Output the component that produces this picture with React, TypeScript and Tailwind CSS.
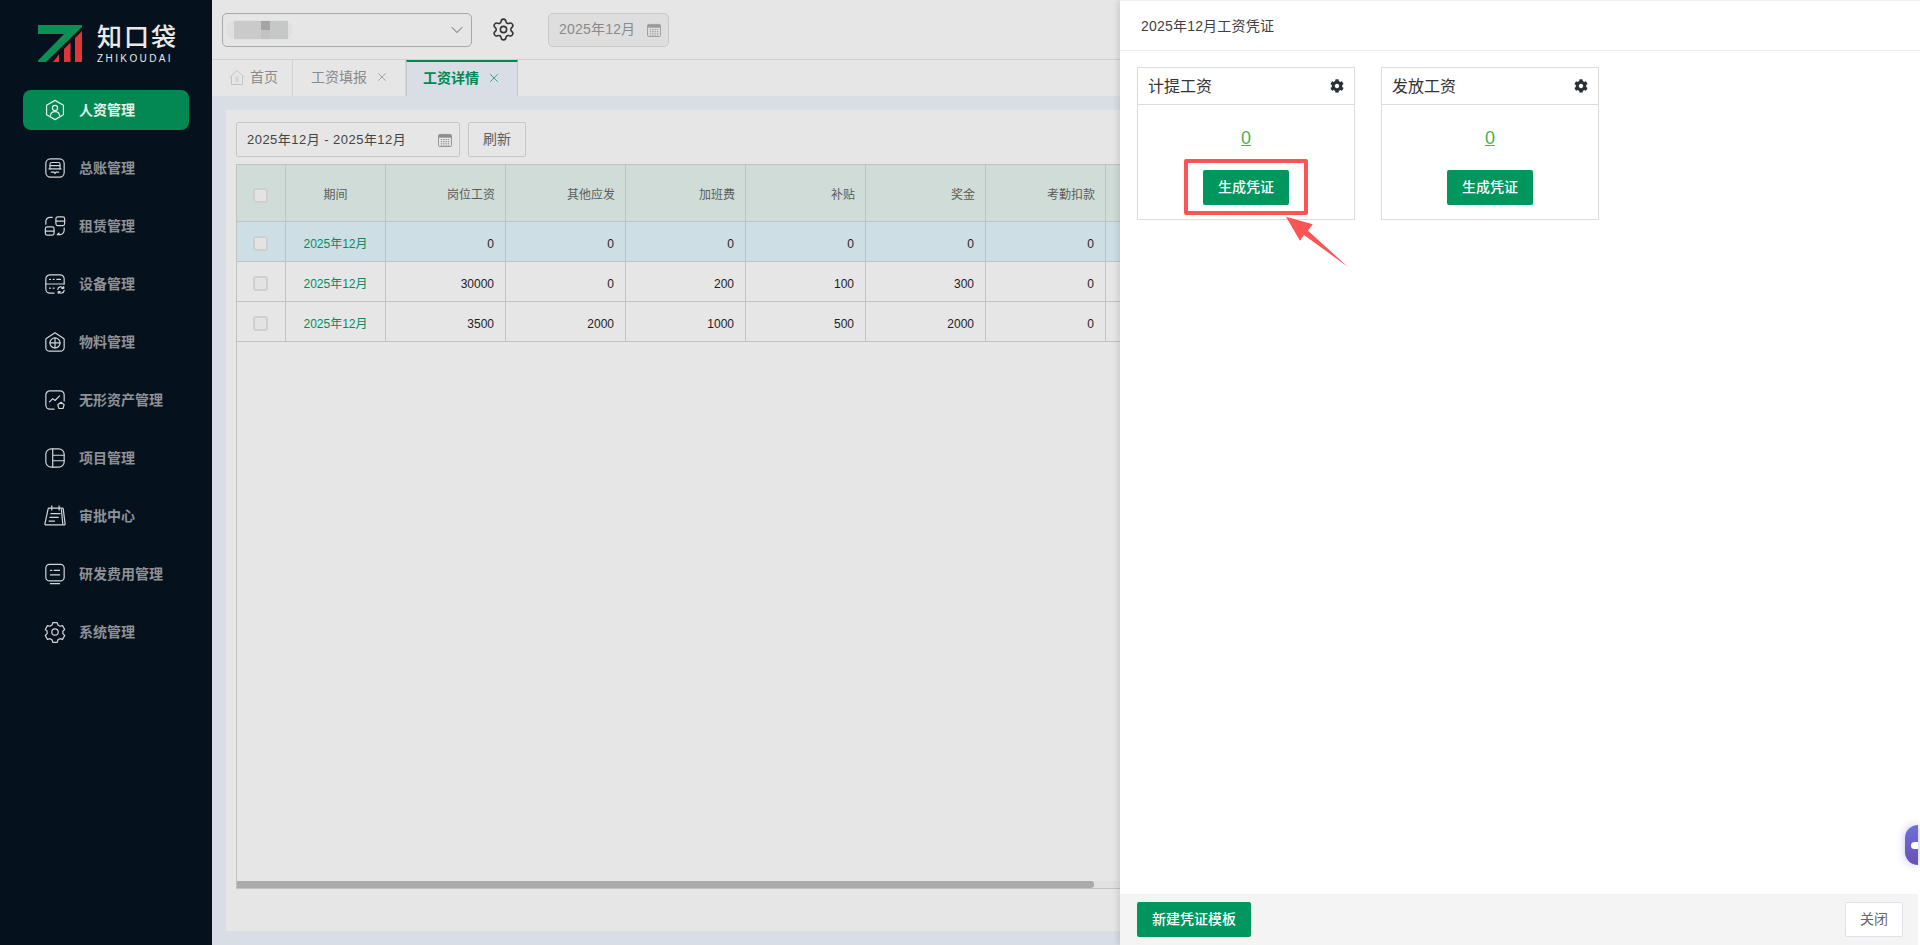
import React from "react";
import { ChevronDown, Settings, X } from "lucide-react";
import { FaCog } from "react-icons/fa";

const font = "font-['Liberation_Sans','Noto_Sans_CJK_SC',sans-serif]";

function I({ children }: { children: React.ReactNode }) {
  return (
    <svg width="24" height="24" viewBox="0 0 24 24" fill="none" stroke="currentColor" strokeWidth="1.3" strokeLinecap="round" strokeLinejoin="round" className="shrink-0">
      {children}
    </svg>
  );
}

const navIcons: Record<string, React.ReactNode> = {
  hr: (
    <I>
      <path d="M12 1.500l9.200 5.300v10.400L12 22.500l-9.200-5.300V6.800z" />
      <circle cx="12" cy="9.800" r="2.800" />
      <path d="M7 18c.4-2.800 2.400-4.200 5-4.200s4.600 1.400 5 4.200" />
    </I>
  ),
  ledger: (
    <I>
      <rect x="2" y="2" width="20" height="20" rx="5" />
      <path d="M6.500 13V8a2 2 0 0 1 2-2h7a2 2 0 0 1 2 2v5" />
      <path d="M5.500 13h13M7 9.500h10M8 16.500h3l1 1.500 1-1.500h3" />
    </I>
  ),
  lease: (
    <I>
      <rect x="13" y="2" width="9.500" height="9.500" rx="2" />
      <path d="M13 6.700h9.500" />
      <rect x="1.500" y="13" width="9.500" height="9" rx="2" />
      <path d="M1.500 17.500h9.500" />
      <path d="M2 10V7a4.500 4.500 0 0 1 4.500-4.500H9" />
      <path d="M22 14v2.500a5 5 0 0 1-5 5h-2.500M14.500 21.500l2-1.800" />
    </I>
  ),
  device: (
    <I>
      <path d="M11 22H6.500A4.500 4.500 0 0 1 2 17.500v-11A4.500 4.500 0 0 1 6.500 2h11A4.500 4.500 0 0 1 22 6.500V12" />
      <path d="M2 12h20M6 7h1M10 7h1M14 7h4M6 16.500h1M10 16.500h1" />
      <path d="M15 18a3.300 3.300 0 0 1 6-1.500M22 19a3.300 3.300 0 0 1-6 1.500M21.500 14.800v2h-2M15.500 22.200v-2h2" />
    </I>
  ),
  material: (
    <I>
      <path d="M12 1.800l9.500 6.400a1.500 1.500 0 0 1 .5 1.200V18a4 4 0 0 1-4 4H6a4 4 0 0 1-4-4V9.400a1.500 1.500 0 0 1 .5-1.200z" />
      <circle cx="12" cy="13" r="5.500" />
      <path d="M12 7.500v11M6.500 13h11" />
    </I>
  ),
  asset: (
    <I>
      <path d="M11 22H6.500A4.500 4.500 0 0 1 2 17.500v-11A4.500 4.500 0 0 1 6.500 2h11A4.500 4.500 0 0 1 22 6.500V13" />
      <path d="M6 14l3.500-3.500 2.500 2 5-5" />
      <path d="M18.500 14.500l3.500 2.600-1.300 4.200h-4.400L15 17.100z" />
    </I>
  ),
  project: (
    <I>
      <rect x="2" y="2" width="20" height="20" rx="6" />
      <path d="M9.500 2v20M9.500 9h12.500M9.500 15h12.500" />
    </I>
  ),
  approve: (
    <I>
      <path d="M5.500 3.500h14.500a1 1 0 0 1 1 .8L23 20.500a1 1 0 0 1-1 1.200H2a1 1 0 0 1-1-1.200L4.500 4.300a1 1 0 0 1 1-.8z" />
      <path d="M8.500 1v4.500M16.500 1v4.500M7.500 9.500h10M6.500 13.500h9M5.500 17.500h6M19 5l1.500 16" />
    </I>
  ),
  rd: (
    <I>
      <rect x="2" y="1.500" width="20" height="18" rx="4" />
      <path d="M7 8h1.500M11 8h6M7 13h10M7 22.500h10" />
    </I>
  ),
  system: (
    <I>
      <path d="M9.600 2.500h4.800l.8 2.700 2.300 1.300 2.700-.7 2.400 4.200-2 2 0 2.600 2 2-2.400 4.200-2.700-.7-2.300 1.300-.8 2.700H9.600l-.8-2.700-2.300-1.300-2.700.7-2.400-4.200 2-2V12l-2-2 2.400-4.200 2.700.7 2.300-1.300z" transform="translate(0 -.8)" />
      <circle cx="12" cy="12" r="3.500" />
    </I>
  ),
};

const nav = [
  ["人资管理", "hr"],
  ["总账管理", "ledger"],
  ["租赁管理", "lease"],
  ["设备管理", "device"],
  ["物料管理", "material"],
  ["无形资产管理", "asset"],
  ["项目管理", "project"],
  ["审批中心", "approve"],
  ["研发费用管理", "rd"],
  ["系统管理", "system"],
];

function CalendarIcon({ color = "#8d8d8d" }: { color?: string }) {
  return (
    <svg width="14" height="14" viewBox="0 0 15 15" className="shrink-0">
      <rect x="0.500" y="1.500" width="14" height="13" rx="1.500" fill="none" stroke={color} />
      <rect x="1" y="2" width="13" height="3" fill={color} />
      <path d="M3 7h9M3 9h9M3 11h9M3 13h9" stroke={color} strokeDasharray="1.500 1" strokeWidth="1" />
    </svg>
  );
}

const columns = ["岗位工资", "其他应发", "加班费", "补贴", "奖金", "考勤扣款", ""];
const rows = [
  { v: ["0", "0", "0", "0", "0", "0", ""], sel: true },
  { v: ["30000", "0", "200", "100", "300", "0", ""], sel: false },
  { v: ["3500", "2000", "1000", "500", "2000", "0", ""], sel: false },
];

function Check() {
  return <span className="block mx-auto w-[15px] h-[15px] rounded-[3px] border-2 border-[#cfcfcf] bg-[#e3e3e3]" />;
}

function VoucherCard({ title }: { title: string }) {
  return (
    <div className="w-[218px] h-[153px] border border-[#dcdcdc] flex flex-col">
      <div className="h-[37px] border-b border-[#dcdcdc] flex items-center justify-between pl-[10px] pr-[10px] pt-[2px] shrink-0">
        <span className="text-[16px] text-[#333]">{title}</span>
        <FaCog size={14} className="text-[#2c3138] mb-[2px]" />
      </div>
      <div className="flex-1 flex flex-col items-center">
        <a className="text-[18px] leading-[24px] mt-[21px] text-[#4cb04c] underline">0</a>
        <button className="mt-[20px] w-[86px] h-[35px] rounded-[2px] bg-[#00965e] text-white text-[14px] font-medium">生成凭证</button>
      </div>
    </div>
  );
}

export default function App() {
  return (
    <div className={`relative flex w-full h-[945px] overflow-hidden bg-[#e6e6e6] ${font}`}>
      <aside className="w-[212px] shrink-0 bg-[#06111e] flex flex-col">
        <div className="h-[90px] pt-[25px] pl-[38px] flex items-start gap-[15px] shrink-0">
          <svg width="44" height="37" viewBox="0 0 44 37" className="shrink-0">
            <path d="M0 0H44V2L8 37H0V35.500L26 9H0z" fill="#0a8f54" />
            <path d="M15 37L21 29.500V37zM26 37V24L32.500 17.500V37zM37 37V13L44 6V37z" fill="#e23535" />
          </svg>
          <div className="flex flex-col text-[#e9e9e9]">
            <span className="text-[25px] leading-[25px] font-medium tracking-[2px] whitespace-nowrap">知口袋</span>
            <span className="text-[10px] leading-[10px] mt-[4px] tracking-[2.4px] whitespace-nowrap">ZHIKOUDAI</span>
          </div>
        </div>
        <nav className="flex flex-col gap-[18px] pl-[23px] pr-[23px]">
          {nav.map(([label, key], i) => (
            <div key={label} className={`h-[40px] flex items-center pl-[21px] gap-[13px] rounded-[8px] ${i === 0 ? "bg-[#048853] text-[#e4f2ec]" : "text-[#d4d6d8]"}`}>
              <span className="w-[22px] h-[22px] flex items-center justify-center [&>svg]:w-[22px] [&>svg]:h-[22px]">{navIcons[key]}</span>
              <span className={`text-[14px] font-bold whitespace-nowrap ${i === 0 ? "text-[#e4f2ec]" : "text-[#8e9297]"}`}>{label}</span>
            </div>
          ))}
        </nav>
      </aside>

      <main className="flex-1 min-w-0 flex flex-col">
        <div className="h-[60px] shrink-0 border-b border-[#cfcfcf] flex items-center pl-[10px]">
          <div className="w-[250px] h-[34px] border border-[#a9a9a9] rounded-[5px] flex items-center justify-between pl-[3px] pr-[4px]">
            <svg width="70" height="20" viewBox="0 0 70 20">
              <rect x="0" y="0" width="66" height="20" rx="9" fill="#e0e0e0" />
              <rect x="8" y="1" width="27" height="18" fill="#cacaca" />
              <rect x="35" y="1" width="9" height="9" fill="#a5a5a5" />
              <rect x="35" y="10" width="9" height="9" fill="#c2c2c2" />
              <rect x="44" y="1" width="18" height="18" fill="#c6c8c8" />
            </svg>
            <ChevronDown size={20} strokeWidth={1.1} className="text-[#555]" />
          </div>
          <Settings size={25} strokeWidth={1.5} className="ml-[19px] text-[#333]" />
          <div className="ml-[32px] w-[121px] h-[34px] border border-[#c8c8c8] bg-[#dedede] rounded-[5px] flex items-center pl-[10px] gap-[12px]">
            <span className="text-[14px] text-[#8a8a8a] tracking-[0.2px] whitespace-nowrap">2025年12月</span>
            <CalendarIcon color="#999" />
          </div>
        </div>

        <div className="h-[36px] shrink-0 flex items-stretch">
          <div className="w-[81px] border-r border-[#d4d4d4] flex items-center pl-[17px] gap-[5px] pb-[1px]">
            <svg width="16" height="15" viewBox="0 0 16 15" fill="none" stroke="#c4c4c4" strokeWidth="1">
              <path d="M0.500 7.500L8 0.700l7.500 6.800M2.500 6.500V14.500h11V6.500" />
              <path d="M6 6l2 2 2-2M6 9h4M6 11h4M8 8v4.500" stroke="#cfcfcf" />
            </svg>
            <span className="text-[14px] text-[#8a8a8a]">首页</span>
          </div>
          <div className="w-[113px] border-r border-[#d4d4d4] flex items-center pl-[18px] gap-[8px] pb-[2px]">
            <span className="text-[14px] text-[#8a8a8a] whitespace-nowrap">工资填报</span>
            <X size={14} strokeWidth={1.2} className="text-[#8a8a8a]" />
          </div>
          <div className="w-[112px] bg-[#d9dde6] border-t-2 border-x border-t-[#048853] border-x-[#c4c7ce] flex items-center pl-[16px] gap-[8px] pb-[2px]">
            <span className="text-[14px] font-bold text-[#048853] whitespace-nowrap">工资详情</span>
            <X size={14} strokeWidth={1.2} className="text-[#048853]" />
          </div>
        </div>

        <div className="flex-1 min-h-0 bg-[#d9dde6] pt-[14px] pb-[14px] pl-[14px] flex flex-col">
          <div className="flex-1 min-h-0 bg-[#e6e6e6] pt-[12px] pl-[10px] pb-[42px] flex flex-col">
            <div className="flex gap-[8px] shrink-0 h-[35px]">
              <div className="w-[224px] border border-[#c6c6c6] rounded-[2px] flex items-center justify-between pl-[10px] pr-[7px]">
                <span className="text-[13px] text-[#444] whitespace-nowrap tracking-[0.47px]">2025年12月 - 2025年12月</span>
                <CalendarIcon />
              </div>
              <div className="w-[58px] border border-[#c6c6c6] rounded-[2px] flex items-center justify-center text-[14px] text-[#5f5f5f]">刷新</div>
            </div>
            <div className="mt-[7px] flex-1 min-h-0 border border-[#c2c2c2] border-r-0 flex flex-col overflow-hidden">
              <div className="flex-1 min-h-0 overflow-hidden">
                <table className="table-fixed border-separate border-spacing-0 w-[989px] text-[12px]">
                  <colgroup>
                    <col className="w-[49px]" />
                    <col className="w-[100px]" />
                    {columns.map((_, i) => (
                      <col key={i} className="w-[120px]" />
                    ))}
                  </colgroup>
                  <thead>
                    <tr className="h-[57px] bg-[#d0dcd7] text-[#5c5c5c]">
                      <th className="border-r border-b border-[#c2c2c2] font-normal pt-[5px] pr-[2px]"><Check /></th>
                      <th className="border-r border-b border-[#c2c2c2] font-normal text-center pt-[3px]">期间</th>
                      {columns.map((c, i) => (
                        <th key={i} className="border-r border-b border-[#c2c2c2] font-normal text-right pr-[10px] pt-[3px]">{c}</th>
                      ))}
                    </tr>
                  </thead>
                  <tbody>
                    {rows.map((r, i) => (
                      <tr key={i} className={`h-[40px] ${r.sel ? "bg-[#cddee5]" : ""}`}>
                        <td className="border-r border-b border-[#c2c2c2] pt-[4px] pr-[2px]"><Check /></td>
                        <td className="border-r border-b border-[#c2c2c2] text-center text-[#0a8a5e] pt-[4px]">2025年12月</td>
                        {r.v.map((v, j) => (
                          <td key={j} className="border-r border-b border-[#c2c2c2] text-right pr-[11px] pt-[4px] text-[#222]">{v}</td>
                        ))}
                      </tr>
                    ))}
                  </tbody>
                </table>
              </div>
              <div className="h-[7px] shrink-0 bg-[#e0e0e0]">
                <div className="w-[857px] h-[7px] rounded-r-[3px] bg-[#ababab]" />
              </div>
            </div>
          </div>
        </div>
      </main>

      <div className="absolute right-0 top-0 bottom-0 w-[800px] bg-white shadow-[-2px_0_6px_rgba(0,0,0,0.12)] flex flex-col">
        <div className="h-[51px] shrink-0 border-t border-b border-[#f0f0f0] flex items-center pl-[21px] pt-[1px] text-[14px] text-[#3f3f3f] tracking-[0.2px]">2025年12月工资凭证</div>
        <div className="flex-1 min-h-0 pt-[16px] pl-[17px] flex gap-[26px]">
          <VoucherCard title="计提工资" />
          <VoucherCard title="发放工资" />
        </div>
        <div className="h-[51px] shrink-0 mr-[2px] bg-[#f4f4f4] flex items-start justify-between pt-[8px] pl-[17px] pr-[15px]">
          <button className="w-[114px] h-[35px] rounded-[2px] bg-[#00965e] text-white text-[14px] font-medium">新建凭证模板</button>
          <button className="w-[58px] h-[35px] rounded-[2px] bg-white border border-[#dfe1e8] text-[14px] text-[#666]">关闭</button>
        </div>

        <div className="absolute left-[64px] top-[159px] w-[124px] h-[56px] border-[4px] border-[#fb5454] rounded-[2px]" />
        <svg width="66" height="54" viewBox="0 0 66 54" className="absolute left-[165px] top-[216px]">
          <path d="M1 .7L27.700 8.300 23 14.700 62.700 50.700 19 19 15 24.700z" fill="#fb5454" />
        </svg>
        <div className="absolute right-[2px] top-[825px] w-[13px] h-[40px] rounded-l-[14px] bg-gradient-to-b from-[#6b70dc] to-[#6a4fb4] shadow-[0_0_8px_rgba(107,112,220,0.45)] overflow-hidden">
          <span className="absolute left-[6px] top-[17px] w-[10px] h-[7px] rounded-full bg-white" />
        </div>
      </div>
    </div>
  );
}
